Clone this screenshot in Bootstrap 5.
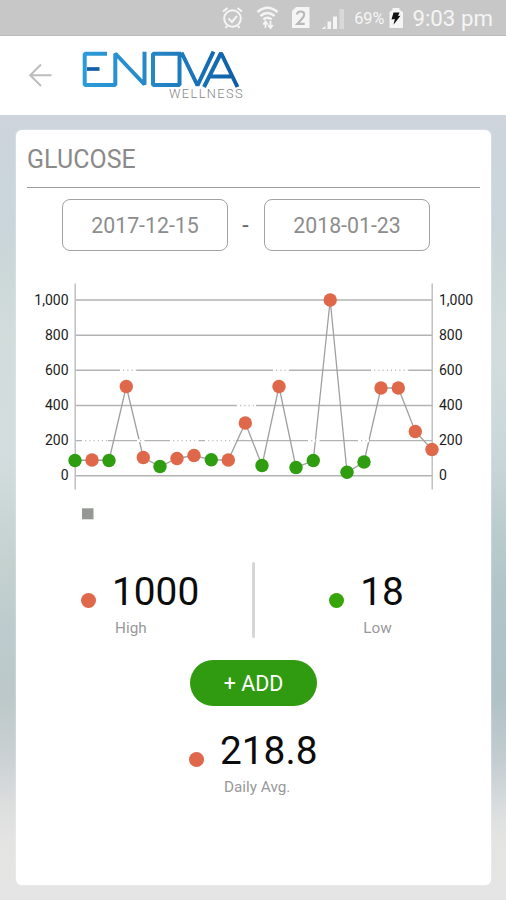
<!DOCTYPE html>
<html lang="en">
<head>
<meta charset="utf-8">
<meta name="viewport" content="width=device-width, initial-scale=1">
<title>Enova Wellness – Glucose</title>
<link href="https://cdn.jsdelivr.net/npm/bootstrap@5.3.0/dist/css/bootstrap.min.css" rel="stylesheet">
<style>
  body { font-family: Roboto, "Noto Sans", sans-serif; min-height: 900px; overflow: hidden; background: #e5e5e5; }
  .app { height: 900px; }
  .status-bar { height: 36px; background: #c7c7c7; color: #f5f5f5; padding-right: 13px; border-bottom: 1px solid #bdbdbd; }
  .battery-text { font-size: 16.3px; line-height: 36px; padding-top: 3px; }
  .clock { font-size: 22.3px; line-height: 36px; padding-top: 1px; }
  .app-bar { height: 79px; }
  .screen {
    padding: 15px 15px 15px 16px;
    background:
      linear-gradient(to bottom, rgba(140,175,188,0) 30%, rgba(140,175,188,.3) 60%, rgba(140,175,188,.25) 75%, rgba(140,175,188,0) 90%) right / 15px 100% no-repeat,
      linear-gradient(to bottom, #ced5dc 0%, #cad5dc 12%, #cbd7d8 19%, #d2dcdb 28%, #d3dddf 43%, #c4d1cf 57%, #bdcbce 66%, #bcc8c9 74%, #cbd1d4 82%, #dcdede 88%, #e4e4e3 93%, #e5e5e5 100%);
  }
  .panel { border: 0; border-radius: 6px; box-shadow: 0 0 2px rgba(255,255,255,.7); }
  .panel-title { font-size: 24.9px; line-height: 30px; letter-spacing: .1px; color: #8a8a8a; height: 58px; margin: 0 11px; padding-top: 15px; border-bottom: 1.5px solid #9a9a9a; }
  .dates { margin-top: 11px; padding-left: 45.5px; gap: 14px; }
  .date-field { width: 166px; height: 52px; border: 1.5px solid #a2a2a2; border-radius: 8px; color: #8d8d8d; font-size: 21.3px; padding: 2px 0 0 1px; --bs-btn-hover-color: #8d8d8d; }
  .dash { width: 8px; color: #666; font-size: 23px; line-height: 1; }
  .chart { height: 255px; margin-top: 19px; }
  .axis-text { font-size: 14px; fill: #1c1c1c; }
  .stats { margin-top: 37px; height: 76px; }
  .split { width: 3.5px; background: #d6d6d6; border-radius: 2px; }
  .stat-cell { width: 236px; }
  .reading { font-size: 38.8px; line-height: 46px; color: #0c0c0c; }
  .caption-text { font-size: 15.3px; line-height: 20px; color: #999; padding-left: 3px; }
  .dot { width: 15px; height: 15px; border-radius: 50%; flex: none; }
  .dot-high { background: #df684b; }
  .dot-low { background: #36a50a; }
  .cell-high { padding-left: 65px; gap: 16px; }
  .cell-low { padding-left: 74px; gap: 16px; }
  .cell-avg { padding-left: 173px; gap: 16px; margin-top: 22px; }
  .stat-cell .dot { margin-top: 31px; }
  .stat-cell .reading { margin-top: 7px; }
  .stat-cell .caption-text { margin-top: 3px; }
  .cell-avg .dot { margin-top: 24px; }
  .cell-avg .caption-text { margin-top: 3px; padding-left: 4px; }
  .add-btn { width: 127px; height: 46px; margin: 22px 0 0 174px; padding: 2px 0 0; border: 0; background: #309b10; color: #fff; font-size: 21.4px; }
  .add-btn:hover { background: #2a8a0d; color: #fff; }
</style>
</head>
<body>
<div class="app d-flex flex-column">
  <div class="status-bar d-flex justify-content-end align-items-center">
    <svg width="134" height="35" viewBox="220 0 134 35" fill="none" stroke="#f5f5f5">
      <circle cx="232.5" cy="18.5" r="8.3" stroke-width="2"/>
      <path d="M228.5 18.5l3.5 3.5 5-6M223 11.5l4.5-3.5M237.5 8l4.5 3.5M227 26l-1.5 1.8M238 26l1.5 1.8" stroke-width="2"/>
      <path d="M257.500 12q10-8.500 20 0M260.500 16q7-6 14 0M263.500 19.500q4-3.500 8 0" stroke-width="2.500"/>
      <path d="M265.500 28v-6M263.200 24.500l2.300-3 2.300 3M270.500 21v7M268.200 25l2.300 3 2.300-3" stroke-width="1.800"/>
      <path d="M292 11l4-4h13.500v21H292z" fill="#f5f5f5" stroke="none"/>
      <path d="M297 14.500q.3-3 3.700-3 3.500 0 3.500 3 0 1.700-2 4l-4.800 5.300h7.300" stroke="#b9b9b9" stroke-width="2.200"/>
      <g stroke="none" fill="#f5f5f5"><path d="M321.500 29l4-3v3z"/><rect x="327.500" y="21.500" width="3.500" height="7.500"/><rect x="333" y="16.500" width="4" height="12.500"/><rect x="339.500" y="9" width="4.500" height="20" opacity=".4"/></g>
    </svg>
    <span class="battery-text">69%</span>
    <svg class="ms-1" width="16" height="35" viewBox="388 0 16 35">
      <path d="M389.500 12l3-2V8h7v2l3.500 2v16h-13.500z" fill="#f5f5f5"/>
      <path d="M393.500 12.500h6l-1.500 3.500 2.500-.3-7 9 1.300-5.700-3.300.5z" fill="#111"/>
    </svg>
    <span class="clock ms-2">9:03 pm</span>
  </div>

  <header class="app-bar bg-white d-flex align-items-center">
    <svg width="260" height="79" viewBox="0 36 260 79" role="img" aria-label="Enova Wellness">
      <defs>
        <linearGradient id="brand" gradientUnits="userSpaceOnUse" x1="83" y1="0" x2="239" y2="0">
          <stop offset="0" stop-color="#2c9bd9"/><stop offset=".5" stop-color="#2384c6"/><stop offset="1" stop-color="#0d5da6"/>
        </linearGradient>
      </defs>
      <path d="M51.500 75.200H30M41 64.500L30.200 75.200 41 86" fill="none" stroke="#bcbcbc" stroke-width="2"/>
      <g fill="none" stroke="url(#brand)" stroke-width="4" stroke-linejoin="bevel">
        <path d="M107 53.700H84.700V85H115.300V53.500L144.500 84.500V51.700"/>
        <path d="M181 53.700H153V85H179.500V53.700M181.500 52.500L197.500 85.500 213.500 51.700"/>
        <path d="M204 87L221 53 237.500 87M209.500 76.500H231"/>
      </g>
      <path d="M87 69h12.500" stroke="#1260a6" stroke-width="3.700"/>
      <text x="169" y="98.300" font-size="12.800" font-weight="300" textLength="73.500" lengthAdjust="spacing" fill="#858585">WELLNESS</text>
    </svg>
  </header>

  <main class="screen flex-grow-1">
    <section class="panel card h-100">
      <h1 class="panel-title fw-normal">GLUCOSE</h1>
      <div class="dates d-flex align-items-center">
        <button class="date-field btn bg-white" type="button">2017-12-15</button>
        <span class="dash text-center">-</span>
        <button class="date-field btn bg-white" type="button">2018-01-23</button>
      </div>

      <svg class="chart w-100" viewBox="16 270 475 255">
        <path d="M75 300H432M75 335.200H432M75 370.300H432M75 405.500H432M75 440.600H432M75 475.800H432" stroke="#b3b3b3" stroke-width="1.400"/>
        <path d="M75.200 283.500V489.500M432.200 283.500V489.500" stroke="#bcbcbc" stroke-width="1.400"/>
        <polyline points="75,460.500 92,460 109,460.500 126.300,386.500 143.300,457.500 160,466.500 177,458.500 194,455.500 211.300,459.800 228.300,460 245.300,423 262,465.500 279,386.500 296,467.500 313.300,460.500 330.200,300 347,472.300 364,462 381,388 398.300,388 415.300,431.500 432,449.500" fill="none" stroke="#a0a0a0" stroke-width="1.300"/>
        <g stroke="#fff" stroke-width="2.600" stroke-dasharray="3.200 1">
          <path d="M120 370.300h17M273 370.300h16M371 370.300h38M237 405.500h19M82 440.600h26M137 440.600h8M170 440.600h29M205 440.600h31M308 440.600h12M358 440.600h11"/>
        </g>
        <g fill="#df684b">
          <circle cx="92" cy="460" r="6.700"/><circle cx="126.300" cy="386.500" r="6.700"/><circle cx="143.300" cy="457.500" r="6.700"/><circle cx="177" cy="458.500" r="6.700"/><circle cx="194" cy="455.500" r="6.700"/><circle cx="228.300" cy="460" r="6.700"/><circle cx="245.300" cy="423" r="6.700"/><circle cx="279" cy="386.500" r="6.700"/><circle cx="330.200" cy="300" r="6.700"/><circle cx="381" cy="388" r="6.700"/><circle cx="398.300" cy="388" r="6.700"/><circle cx="415.300" cy="431.500" r="6.700"/><circle cx="432" cy="449.500" r="6.700"/>
        </g>
        <g fill="#2f9d10">
          <circle cx="75" cy="460.500" r="6.700"/><circle cx="109" cy="460.500" r="6.700"/><circle cx="160" cy="466.500" r="6.700"/><circle cx="211.300" cy="459.800" r="6.700"/><circle cx="262" cy="465.500" r="6.700"/><circle cx="296" cy="467.500" r="6.700"/><circle cx="313.300" cy="460.500" r="6.700"/><circle cx="347" cy="472.300" r="6.700"/><circle cx="364" cy="462" r="6.700"/>
        </g>
        <g class="axis-text" text-anchor="end">
          <text x="68.500" y="304.500">1,000</text><text x="68.500" y="339.700">800</text><text x="68.500" y="375">600</text><text x="68.500" y="410">400</text><text x="68.500" y="445">200</text><text x="68.500" y="480.300">0</text>
        </g>
        <g class="axis-text">
          <text x="439" y="304.500">1,000</text><text x="439" y="339.700">800</text><text x="439" y="375">600</text><text x="439" y="410">400</text><text x="439" y="445">200</text><text x="439" y="480.300">0</text>
        </g>
        <rect x="82" y="508.300" width="11.500" height="11" fill="#959895"/>
      </svg>

      <div class="stats d-flex">
        <div class="stat-cell cell-high d-flex">
          <span class="dot dot-high"></span>
          <div><div class="reading">1000</div><div class="caption-text">High</div></div>
        </div>
        <div class="split"></div>
        <div class="stat-cell cell-low d-flex">
          <span class="dot dot-low"></span>
          <div><div class="reading">18</div><div class="caption-text">Low</div></div>
        </div>
      </div>

      <button class="add-btn btn rounded-pill" type="button">+ ADD</button>

      <div class="cell-avg d-flex">
        <span class="dot dot-high"></span>
        <div><div class="reading">218.8</div><div class="caption-text">Daily Avg.</div></div>
      </div>
    </section>
  </main>
</div>
<script src="https://cdn.jsdelivr.net/npm/bootstrap@5.3.0/dist/js/bootstrap.bundle.min.js"></script>
</body>
</html>
